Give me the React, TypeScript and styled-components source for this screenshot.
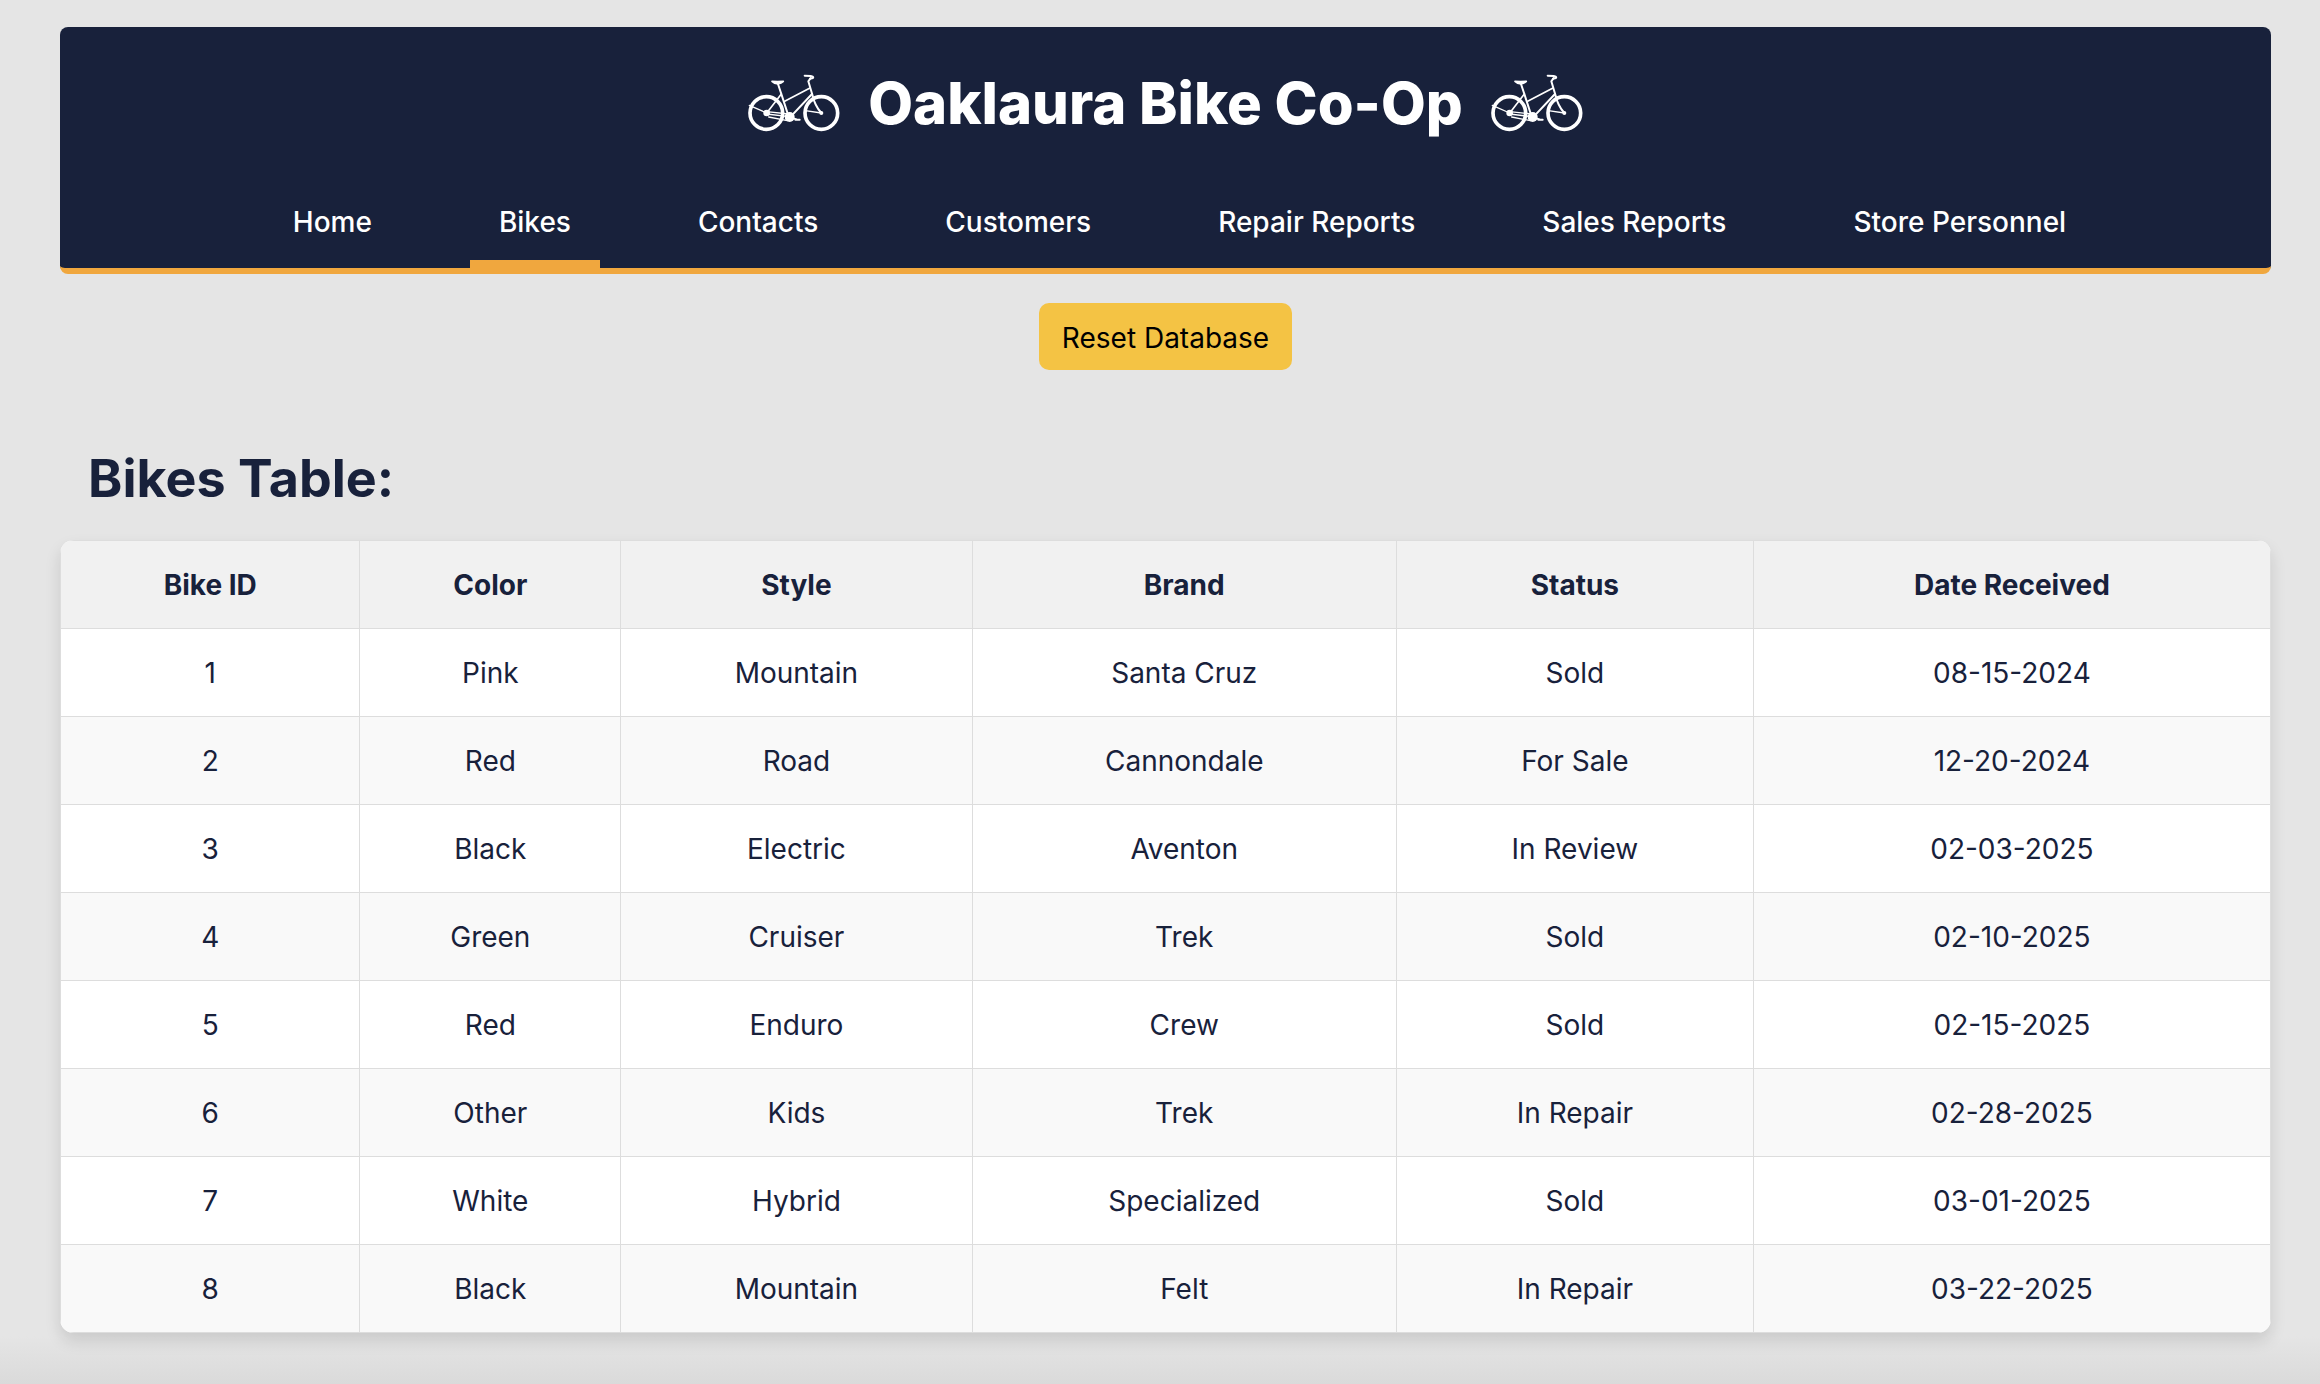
import React from "react";
import styled, { createGlobalStyle, css } from "styled-components";

const navy = "#18213b";
const orange = "#f0a73e";
const line = "#dddddd";

const GlobalStyle = createGlobalStyle`
  *, *::before, *::after { box-sizing: border-box; }
  html { background: #e5e5e5; }
  body {
    margin: 0;
    color: ${navy};
    font-family: Inter, "Liberation Sans", sans-serif;
    font-size: 28px;
    line-height: 40px;
  }
`;

const Page = styled.div`
  min-height: 100vh;
  padding: 27px 49px 49px 60px;
  background: linear-gradient(to top, #dadada, #e5e5e5 48px);
`;

const Header = styled.header`
  background: ${navy};
  color: #ffffff;
  border-bottom: 6px solid ${orange};
  border-radius: 8px;
`;

const Brand = styled.div`
  display: flex;
  align-items: center;
  justify-content: center;
  gap: 28px;
  padding-top: 38px;
`;

const Title = styled.h1`
  margin: 0;
  font-size: 58px;
  line-height: 76px;
  font-weight: 800;
`;

const BikeSvg = styled.svg`
  display: block;
  width: 92px;
  height: 58px;
`;

const NavList = styled.ul`
  display: flex;
  justify-content: center;
  gap: 69px;
  margin: 0;
  padding: 61px 0 0 28px;
  list-style: none;
`;

const NavLink = styled.a<{ $active?: boolean }>`
  display: block;
  padding: 0 29px 18px;
  border-bottom: 8px solid ${(p) => (p.$active ? orange : "transparent")};
  color: inherit;
  font-weight: 500;
  text-decoration: none;
`;

const ResetForm = styled.form`
  display: flex;
  justify-content: center;
  padding-top: 29px;
`;

const ResetButton = styled.button`
  padding: 15px 23px 12px;
  border: 0;
  border-radius: 10px;
  background: #f4c344;
  color: #000000;
  font: inherit;
  cursor: pointer;
`;

const Heading = styled.h2`
  margin: 76px 0 28px;
  padding-left: 28px;
  font-size: 52px;
  line-height: 66px;
  font-weight: 700;
`;

const Table = styled.table`
  width: 100%;
  table-layout: fixed;
  border-collapse: collapse;
  border-radius: 14px;
  overflow: hidden;
  background: #ffffff;
  box-shadow: 0 8px 16px rgba(0, 0, 0, 0.12);
`;

const Col = styled.col<{ $share: string }>`
  width: ${(p) => p.$share};
`;

const cell = css`
  border: 1px solid ${line};
  text-align: center;
`;

const HeadCell = styled.th`
  ${cell}
  padding: 24px 24px 23px;
  background: #f1f1f1;
  font-weight: 700;
`;

const Cell = styled.td`
  ${cell}
  padding: 24px 24px 23px;
`;

const Row = styled.tr`
  &:nth-child(even) { background: #f9f9f9; }
`;

const pages = ["Home", "Bikes", "Contacts", "Customers", "Repair Reports", "Sales Reports", "Store Personnel"];

const columns = [
  { label: "Bike ID", share: "13.55%" },
  { label: "Color", share: "11.8%" },
  { label: "Style", share: "15.9%" },
  { label: "Brand", share: "19.2%" },
  { label: "Status", share: "16.15%" },
  { label: "Date Received", share: "23.4%" },
];

const bikes = [
  ["1", "Pink", "Mountain", "Santa Cruz", "Sold", "08-15-2024"],
  ["2", "Red", "Road", "Cannondale", "For Sale", "12-20-2024"],
  ["3", "Black", "Electric", "Aventon", "In Review", "02-03-2025"],
  ["4", "Green", "Cruiser", "Trek", "Sold", "02-10-2025"],
  ["5", "Red", "Enduro", "Crew", "Sold", "02-15-2025"],
  ["6", "Other", "Kids", "Trek", "In Repair", "02-28-2025"],
  ["7", "White", "Hybrid", "Specialized", "Sold", "03-01-2025"],
  ["8", "Black", "Mountain", "Felt", "In Repair", "03-22-2025"],
];

function BikeIcon() {
  return (
    <BikeSvg viewBox="50 38 276 174" aria-hidden="true" fill="none" stroke="#fff" strokeLinecap="round" strokeLinejoin="round">
      <circle cx="105" cy="155" r="49" strokeWidth="11" />
      <circle cx="270" cy="155" r="49" strokeWidth="11" />
      <path d="M140 68 L150 98 L172 166" strokeWidth="6" />
      <path d="M150 98 L108 153" strokeWidth="5" />
      <path d="M236 80 L160 120" strokeWidth="5" />
      <path d="M242 98 L176 168" strokeWidth="6" />
      <path d="M106 151 L172 158 M106 158 L172 166 M112 167 L168 178" strokeWidth="4" />
      <path d="M106 155 L54 132 M222 148 L270 155" strokeWidth="4" />
      <path d="M238 50 L231 60 L243 100 Q250 132 270 155" strokeWidth="6" />
      <path d="M220 43 L238 44 Q248 46 245 50 L236 52" strokeWidth="6" />
      <path d="M122 60 Q138 61 156 60 Q150 66 140 68 Q130 68 122 60Z" fill="#fff" strokeWidth="5" />
      <path d="M176 168 L196 174 M192 175 L205 175" strokeWidth="6" />
      <circle cx="106" cy="155" r="10" fill="#fff" stroke="none" />
      <circle cx="175" cy="167" r="15" fill="#fff" stroke="none" />
      <circle cx="270" cy="155" r="6" fill="#fff" stroke="none" />
    </BikeSvg>
  );
}

export default function App() {
  return (
    <>
      <GlobalStyle />
      <Page>
        <Header>
          <Brand>
            <BikeIcon />
            <Title>Oaklaura Bike Co-Op</Title>
            <BikeIcon />
          </Brand>
          <nav>
            <NavList>
              {pages.map((page) => (
                <li key={page}>
                  <NavLink href="#" $active={page === "Bikes"}>{page}</NavLink>
                </li>
              ))}
            </NavList>
          </nav>
        </Header>
        <main>
          <ResetForm onSubmit={(e) => e.preventDefault()}>
            <ResetButton type="submit">Reset Database</ResetButton>
          </ResetForm>
          <Heading>Bikes Table:</Heading>
          <Table>
            <colgroup>
              {columns.map((c) => <Col key={c.label} $share={c.share} />)}
            </colgroup>
            <thead>
              <tr>
                {columns.map((c) => <HeadCell key={c.label} scope="col">{c.label}</HeadCell>)}
              </tr>
            </thead>
            <tbody>
              {bikes.map((bike) => (
                <Row key={bike[0]}>
                  {bike.map((value, i) => <Cell key={i}>{value}</Cell>)}
                </Row>
              ))}
            </tbody>
          </Table>
        </main>
      </Page>
    </>
  );
}
